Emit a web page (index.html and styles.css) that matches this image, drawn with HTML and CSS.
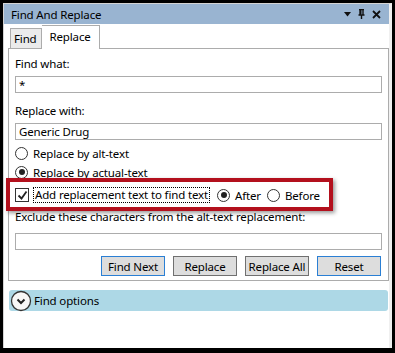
FILE: index.html
```html
<!DOCTYPE html>
<html lang="en">
<head>
  <meta charset="UTF-8">
  <title>Find And Replace</title>
  <link rel="stylesheet" href="styles.css">
</head>
<body>
  <div class="window">
    <div class="title-bar">
      <span class="title">Find And Replace</span>
      <div class="title-icons">
        <svg width="7" height="5" viewBox="0 0 7 5"><path d="M0 0h7L3.5 4.5z" fill="#111"/></svg>
        <svg width="7" height="10" viewBox="0 0 7 10"><path d="M1 0.5h5M2 0.5v5M5 0.5v5M0.5 6h6M3.5 6v4" stroke="#111" stroke-width="1.4" fill="none"/><rect x="2" y="0.5" width="1.5" height="5" fill="#111"/></svg>
        <svg width="9" height="9" viewBox="0 0 9 9"><path d="M1 1l7 7M8 1l-7 7" stroke="#111" stroke-width="1.8"/></svg>
      </div>
    </div>

    <div class="tabs">
      <div class="tab">Find</div>
      <div class="tab tab-active">Replace</div>
    </div>

    <div class="panel">
      <div class="label">Find what:</div>
      <div class="textbox">*</div>

      <div class="label label-gap">Replace with:</div>
      <div class="textbox">Generic Drug</div>

      <div class="option option-first"><span class="radio"></span>Replace by alt-text</div>
      <div class="option"><span class="radio radio-on"></span>Replace by actual-text</div>

      <div class="option check-row">
        <span class="checkbox">
          <svg width="11" height="11" viewBox="0 0 11 11"><path d="M1.5 5.5l3 3 5-7" stroke="#222" stroke-width="1.8" fill="none"/></svg>
        </span>
        <span class="focus-text">Add replacement text to find text</span>
        <span class="radio radio-on"></span>After
        <span class="radio radio-space"></span>Before
      </div>

      <div class="label label-exclude">Exclude these characters from the alt-text replacement:</div>
      <div class="textbox textbox-exclude"></div>

      <div class="buttons">
        <button class="btn btn-default">Find Next</button>
        <button class="btn">Replace</button>
        <button class="btn">Replace All</button>
        <button class="btn btn-default">Reset</button>
      </div>
    </div>

    <div class="expander">
      <svg width="22" height="22" viewBox="0 0 22 22"><circle cx="11" cy="11" r="9.5" fill="#f7f7f7" stroke="#333" stroke-width="1.3"/><path d="M7.5 9.5l3.5 3.5 3.5-3.5" stroke="#222" stroke-width="2" fill="none"/></svg>
      <span>Find options</span>
    </div>
  </div>
</body>
</html>
```

FILE: styles.css
```css
body {
  margin: 0;
  background: #000;
  font-family: "Noto Sans", "Open Sans", sans-serif;
  font-size: 11.5px;
  letter-spacing: -0.15px;
  color: #000;
}
.window {
  margin: 3px 0 0 3px;
  width: 385px;
  height: 344px;
  background: #fff;
  border-top: 1px solid #d4d4d4;
  border-left: 1px solid #d4d4d4;
  border-right: 3px solid #f0f0f0;
}
.title-bar {
  height: 20px;
  background: #99b4d1;
  display: flex;
  align-items: center;
  padding-left: 7px;
}
.title {
  flex: 1;
}
.title-icons {
  display: flex;
  align-items: center;
  gap: 7px;
  padding-right: 8px;
}
.tabs {
  height: 24px;
  display: flex;
  align-items: flex-end;
  padding-left: 6px;
}
.tab {
  height: 19px;
  line-height: 19px;
  padding: 0 4px 0 3px;
  background: #ebebeb;
  border: 1px solid #acacac;
  border-bottom: none;
}
.tab-active {
  position: relative;
  height: 23px;
  line-height: 21px;
  padding: 0 8px;
  background: #fff;
  border-left: none;
  margin-bottom: -1px;
}
.panel {
  margin-left: 4px;
  border: 1px solid #acacac;
  padding: 7px 6px 4px 6px;
}
.label {
  height: 16px;
  line-height: 16px;
}
.label-gap {
  margin-top: 10px;
}
.textbox {
  margin-top: 4px;
  height: 17px;
  box-sizing: border-box;
  border: 1px solid #acacac;
  padding-left: 3px;
  line-height: 15px;
}
.option {
  display: flex;
  align-items: center;
  height: 18px;
  margin-top: 1px;
}
.option-first {
  margin-top: 4px;
}
.radio {
  width: 11px;
  height: 11px;
  border: 1px solid #333;
  border-radius: 50%;
  margin-right: 5px;
  display: inline-flex;
  align-items: center;
  justify-content: center;
}
.radio-on::after {
  content: "";
  width: 6px;
  height: 6px;
  border-radius: 50%;
  background: #222;
}
.radio-space {
  margin-left: 6px;
}
.check-row {
  position: relative;
  margin-top: 5px;
}
.check-row::after {
  content: "";
  position: absolute;
  left: -9px;
  top: -8px;
  width: 319px;
  height: 25px;
  border: 4px solid #b3101d;
  box-shadow: 2px 2px 4px rgba(0, 0, 0, 0.4);
}
.checkbox {
  width: 12px;
  height: 12px;
  border: 1px solid #333;
  display: inline-flex;
  align-items: center;
  justify-content: center;
  margin-right: 4px;
}
.focus-text {
  border: 1px dotted #000;
  padding: 0 1px;
  line-height: 14px;
  margin-right: 7px;
}
.label-exclude {
  margin-top: 5px;
}
.textbox-exclude {
  margin-top: 8px;
}
.buttons {
  display: flex;
  justify-content: flex-end;
  gap: 8px;
  margin-top: 6px;
  padding-right: 1px;
}
.btn {
  width: 64px;
  height: 20px;
  padding: 0;
  background: #dddddd;
  border: 1px solid #707070;
  font-family: inherit;
  font-size: 11.5px;
  letter-spacing: -0.15px;
  color: #000;
}
.btn-default {
  border-color: #2a7fd4;
}
.expander {
  margin: 9px 1px 0 5px;
  height: 21px;
  background: #add8e6;
  border-radius: 3px;
  display: flex;
  align-items: center;
  gap: 2px;
  padding-left: 1px;
}
```
